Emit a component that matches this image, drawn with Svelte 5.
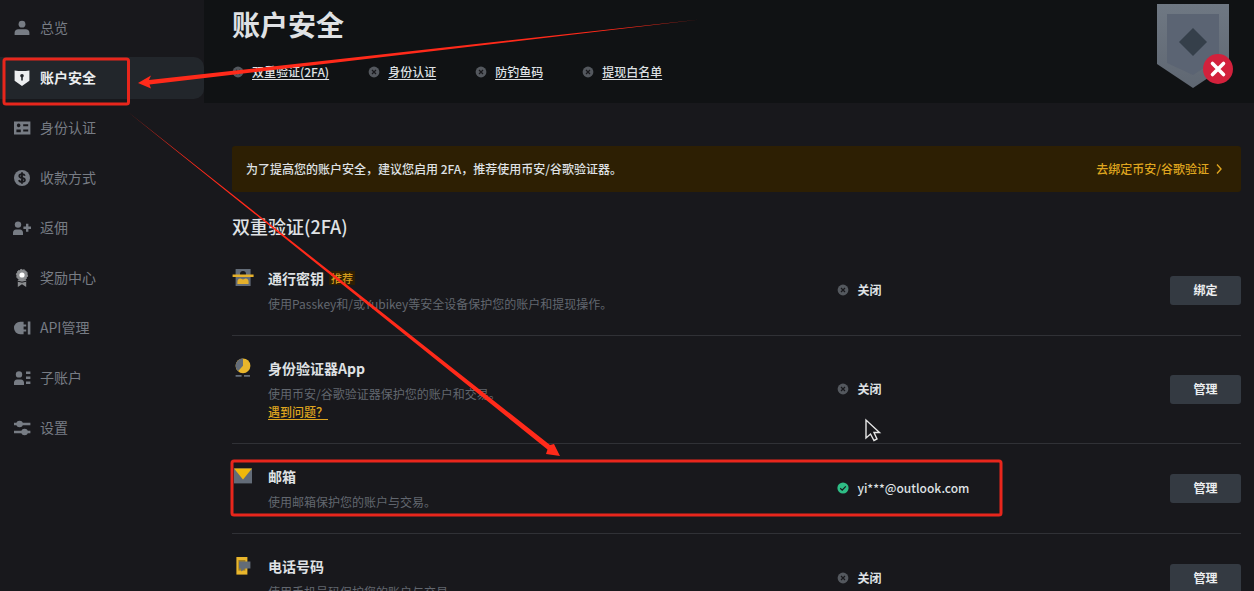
<script>
  const menu = [
    { id: 'overview', label: '总览' },
    { id: 'security', label: '账户安全' },
    { id: 'identity', label: '身份认证' },
    { id: 'payment', label: '收款方式' },
    { id: 'referral', label: '返佣' },
    { id: 'rewards', label: '奖励中心' },
    { id: 'api', label: 'API管理' },
    { id: 'sub', label: '子账户' },
    { id: 'settings', label: '设置' }
  ];
  const checks = ['双重验证(2FA)', '身份认证', '防钓鱼码', '提现白名单'];
  const methods = [
    { id: 'passkey', title: '通行密钥', tag: '推荐', desc: '使用Passkey和/或Yubikey等安全设备保护您的账户和提现操作。', status: '关闭', action: '绑定' },
    { id: 'app', title: '身份验证器App', desc: '使用币安/谷歌验证器保护您的账户和交易。', help: '遇到问题？', status: '关闭', action: '管理' },
    { id: 'email', title: '邮箱', desc: '使用邮箱保护您的账户与交易。', status: 'yi***@outlook.com', on: true, action: '管理' },
    { id: 'phone', title: '电话号码', desc: '使用手机号码保护您的账户与交易。', status: '关闭', action: '管理' }
  ];

  let active = $state('security');
</script>

{#snippet menuIcon(id)}
  <svg class="menu-icon" viewBox="0 0 20 20" fill="currentColor" aria-hidden="true">
    {#if id === 'overview'}
      <circle cx="10" cy="6.2" r="3.4" />
      <path d="M2.6 17v-2.2c0-2.2 1.6-3.6 3.6-3.6h7.6c2 0 3.6 1.4 3.6 3.6V17z" />
    {:else if id === 'security'}
      <path d="M2.6 2.4q7.4 1.2 14.8 0v10.4L10 18l-7.4-5.2z" />
      <circle cx="10" cy="7.8" r="1.8" fill="#22262b" />
      <path d="M9.2 8.6h1.6v4H9.2z" fill="#22262b" />
    {:else if id === 'identity'}
      <path fill-rule="evenodd" d="M2 3.6h16.4v12.8H2zM4.4 11.6v2.6h4.4v-2.6zM11.2 6.2v2h5v-2zM11.2 11.4v2h5v-2zM6.6 5.6a1.8 1.8 0 1 0 .1 0z" />
    {:else if id === 'payment'}
      <circle cx="10" cy="10" r="8" />
      <path d="M12.8 7.7c-.4-1.2-1.5-1.6-2.8-1.6-1.6 0-2.7.7-2.7 1.9 0 2.9 5.6 1.1 5.6 4 0 1.2-1.2 1.9-2.9 1.9-1.5 0-2.7-.6-3-1.9M10 4.2v11.6" fill="none" stroke="#18181c" stroke-width="1.8" />
    {:else if id === 'referral'}
      <circle cx="6" cy="6.6" r="3.2" />
      <path d="M1 17v-2.2c0-1.9 1.2-3.4 3-3.4h4c1.8 0 3 1.5 3 3.4V17zM14 5.8h2.4v2.8H19V11h-2.6v2.8H14V11h-2.6V8.6H14z" />
    {:else if id === 'rewards'}
      <g fill="#8a8c8f">
        <path d="M5.8 12h8.4v7L10 16.2 5.8 19z" />
        <circle cx="10" cy="7" r="5.6" stroke="#8a8c8f" stroke-dasharray="2 1.4" />
      </g>
      <path d="M5.6 13.2q4.400 2 8.800 0" fill="none" stroke="#18181c" />
      <circle cx="10" cy="7" r="2.6" fill="#fff" />
    {:else if id === 'api'}
      <path d="M11.6 3.8v2.6h2.6v2h-2.6v3.2h2.6v2h-2.6v2.6H8.2a6.200 6.2 0 1 1 0-12.4zM15.8 3.6h2.6v12.8h-2.6z" />
    {:else if id === 'sub'}
      <circle cx="7" cy="6.4" r="3.2" />
      <path d="M2 17v-2.4c0-1.9 1.2-3.2 3-3.2h4c1.8 0 3 1.3 3 3.2V17zM14 3.4h4.4V6H14zM14 8.4h4.4V11H14zM14 13.4h4.4V16H14z" />
    {:else}
      <path d="M2 4.8h16.4v2.4H2zM2 12.8h16.4v2.4H2z" />
      <circle cx="7.6" cy="6" r="3.2" />
      <circle cx="12.6" cy="14" r="3.2" />
    {/if}
  </svg>
{/snippet}

{#snippet methodIcon(id)}
  <svg class="method-icon" viewBox="0 0 22 22" aria-hidden="true">
    {#if id === 'passkey'}
      <path fill="#636c78" d="M3.6 2h15v17h-15z" />
      <circle cx="11" cy="7" r="3" fill="#18181c" />
      <path fill="#e5b02b" d="M.6 7.6h21v2.4H.6zM5.4 17v-2c0-2.4 1-3.6 3-3.6l2.6 1.2 2.6-1.2c2 0 3 1.2 3 3.6v2z" />
    {:else if id === 'app'}
      <circle cx="11" cy="8.8" r="7.4" fill="#e9b62c" />
      <path fill="#636c78" d="M11 8.8V1.4A7.4 7.4 0 0 0 6 14.2zM3.6 18h6v1.8h-6zM12 18h6v1.8h-6z" />
    {:else if id === 'email'}
      <path fill="#636c78" d="M2 3.4h18v15H2z" />
      <path fill="#f0b90b" d="M2 3.4h18l-9 11z" />
    {:else}
      <path fill="#e9b62c" d="M4.4 2h11v17.6h-11z" />
      <path fill="#18181c" d="M6.4 5h7v10.6h-7z" opacity=".35" />
      <path fill="#636c78" d="M7 6.4h11.4v7H13L9.2 16.6v-3.2H7z" />
    {/if}
  </svg>
{/snippet}

{#snippet stateIcon(on)}
  <svg class="state-icon" viewBox="0 0 12 12" fill="none" stroke="#18181c" stroke-width="1.2" aria-hidden="true">
    {#if on}
      <circle cx="6" cy="6" r="5.6" fill="#2ebd85" stroke="none" />
      <path d="M3.2 6.2l2 1.9 3.6-3.8" />
    {:else}
      <circle cx="6" cy="6" r="5.4" fill="#54585e" stroke="none" />
      <path d="M4 4l4 4M8 4l-4 4" />
    {/if}
  </svg>
{/snippet}

<div class="page">
  <nav class="sidebar" aria-label="账户">
    {#each menu as item}
      <a href="#{item.id}" class="menu-item" class:active={active === item.id} onclick={() => (active = item.id)}>
        {@render menuIcon(item.id)}
        <span>{item.label}</span>
      </a>
    {/each}
  </nav>

  <main>
    <header>
      <div>
        <h1>账户安全</h1>
        <ul class="checks">
          {#each checks as check}
            <li>{@render stateIcon(false)}<a href="#{check}">{check}</a></li>
          {/each}
        </ul>
      </div>
      <svg class="shield" viewBox="0 0 80 86" aria-hidden="true">
        <defs>
          <linearGradient id="shield-fill" x1="0" y1="0" x2="0" y2="1">
            <stop offset="0" stop-color="#6f7883" />
            <stop offset="1" stop-color="#5f6772" />
          </linearGradient>
        </defs>
        <path fill="url(#shield-fill)" d="M1 1h72v60L37 85 1 61z" />
        <path fill="#5b6473" d="M11 11h52v44L37 72 11 60z" />
        <path fill="#353f4a" d="M37 25l14 14-14 14-14-14z" />
        <circle cx="62" cy="66" r="15" fill="#d3213c" />
        <path d="M56.500 60.500l11 11M67.500 60.500l-11 11" stroke="#fff" stroke-width="3.6" stroke-linecap="round" />
      </svg>
    </header>

    <div class="content">
      <div class="banner">
        <span>为了提高您的账户安全，建议您启用 2FA，推荐使用币安/谷歌验证器。</span>
        <a href="#bind">
          去绑定币安/谷歌验证
          <svg viewBox="0 0 8 12" fill="none" stroke="currentColor" stroke-width="1.4" aria-hidden="true"><path d="M2 1.500L6 6l-4 4.500" /></svg>
        </a>
      </div>

      <h2>双重验证(2FA)</h2>
      {#each methods as m}
        <section class="method">
          <div class="info">
            {@render methodIcon(m.id)}
            <div>
              <h3>{m.title}{#if m.tag}<span class="tag">{m.tag}</span>{/if}</h3>
              <p>{m.desc}</p>
              {#if m.help}<a class="help" href="#help">{m.help}</a>{/if}
            </div>
          </div>
          <div class="status" class:on={m.on}>{@render stateIcon(m.on)}{m.status}</div>
          <button type="button">{m.action}</button>
        </section>
      {/each}
    </div>
  </main>

  <!-- tutorial marks over the page -->
  <svg class="marks" width="1010" height="520" viewBox="0 0 1010 520" aria-hidden="true">
    <g fill="none" stroke="#e8261c" stroke-width="3">
      <rect x="4" y="59" width="124.500" height="45" rx="2" />
      <rect x="232" y="461" width="769" height="54" rx="2" />
    </g>
    <g fill="#ff2a1a">
      <path d="M700 19.500L149 80l2-4.500-13 7.500 13 5.500-1.500-4z" />
      <path d="M128 112L550 445l4-1 6 12-14-2 1.500-4.500z" />
    </g>
    <path d="M866 420v18l4.500-4 3.500 6.500 3-1.500-3-6.500h5.500z" fill="#18181c" stroke="#e6e6e6" stroke-width="1.400" />
  </svg>
</div>

<style>
  :global(body) {
    background: #18181c;
  }
  .page {
    position: relative;
    display: flex;
    height: 100vh;
    overflow: hidden;
    background: #18181c;
    color: #dfe1e4;
    font-family: 'Noto Sans CJK SC', 'Noto Sans', sans-serif;
    font-size: 12px;
    line-height: 18px;
  }
  h1, h2, h3, p, ul {
    margin: 0;
    padding: 0;
  }

  .sidebar {
    flex: 0 0 204px;
    display: flex;
    flex-direction: column;
    gap: 8px;
    padding-top: 7px;
  }
  .menu-item {
    display: flex;
    align-items: center;
    gap: 8px;
    height: 42px;
    padding-left: 12px;
    border-radius: 0 10px 10px 0;
    color: #777c84;
    font-size: 14px;
    text-decoration: none;
  }
  .menu-item span {
    padding-bottom: 2px;
  }
  .menu-item.active {
    background: #22262b;
    color: #eceef0;
    font-weight: 700;
  }
  .menu-icon {
    width: 20px;
    height: 20px;
  }

  main {
    flex: 1;
    min-width: 0;
  }
  header {
    display: flex;
    justify-content: space-between;
    height: 103px;
    box-sizing: border-box;
    padding: 3px 18px 0 28px;
    background: #101214;
  }
  h1 {
    font-size: 28px;
    line-height: 42px;
    font-weight: 700;
  }
  .checks {
    display: flex;
    gap: 39px;
    margin-top: 18px;
    list-style: none;
  }
  .checks li {
    display: flex;
    align-items: center;
    gap: 8px;
    font-weight: 500;
  }
  .checks a {
    color: inherit;
    text-underline-offset: 2px;
  }
  .state-icon {
    flex: none;
    width: 12px;
    height: 12px;
  }
  .shield {
    width: 80px;
    height: 86px;
  }

  .content {
    padding: 43px 13px 0 28px;
  }
  .banner {
    display: flex;
    align-items: center;
    justify-content: space-between;
    height: 46px;
    padding: 0 18px 0 14px;
    border-radius: 3px;
    background: #2d1f03;
    font-weight: 500;
  }
  .banner a {
    display: flex;
    align-items: center;
    gap: 6px;
    color: #dfa51f;
    text-decoration: none;
  }
  .banner svg {
    width: 8px;
    height: 12px;
  }
  h2 {
    margin-top: 20px;
    font-size: 18px;
    line-height: 28px;
    font-weight: 500;
  }

  .method {
    display: grid;
    grid-template-columns: 60% 1fr 71px;
    align-items: center;
    padding: 21px 0 22px;
    border-bottom: 1px solid #303136;
  }
  .method:first-of-type {
    margin-top: 6px;
  }
  .info {
    display: flex;
    gap: 14px;
  }
  .method-icon {
    flex: none;
    width: 22px;
    height: 22px;
  }
  h3 {
    display: flex;
    align-items: center;
    gap: 5px;
    margin-bottom: 6px;
    font-size: 14px;
    line-height: 22px;
    font-weight: 700;
  }
  .tag {
    padding: 0 2px;
    background: #2d1f03;
    color: #d09a1c;
    font-size: 11px;
    line-height: 14px;
    font-weight: 500;
  }
  .method p {
    color: #62676f;
  }
  .help {
    display: block;
    width: fit-content;
    color: #dfa51f;
    font-weight: 500;
    text-underline-offset: 2px;
  }
  .status {
    display: flex;
    align-items: center;
    gap: 8px;
    font-weight: 700;
  }
  .status.on {
    font-weight: 500;
  }
  .method button {
    height: 29px;
    padding: 0;
    border: 0;
    border-radius: 3px;
    background: #343a42;
    color: #eceef0;
    font: inherit;
    font-weight: 700;
    cursor: pointer;
  }

  .marks {
    position: absolute;
    top: 0;
    left: 0;
    pointer-events: none;
  }
</style>
